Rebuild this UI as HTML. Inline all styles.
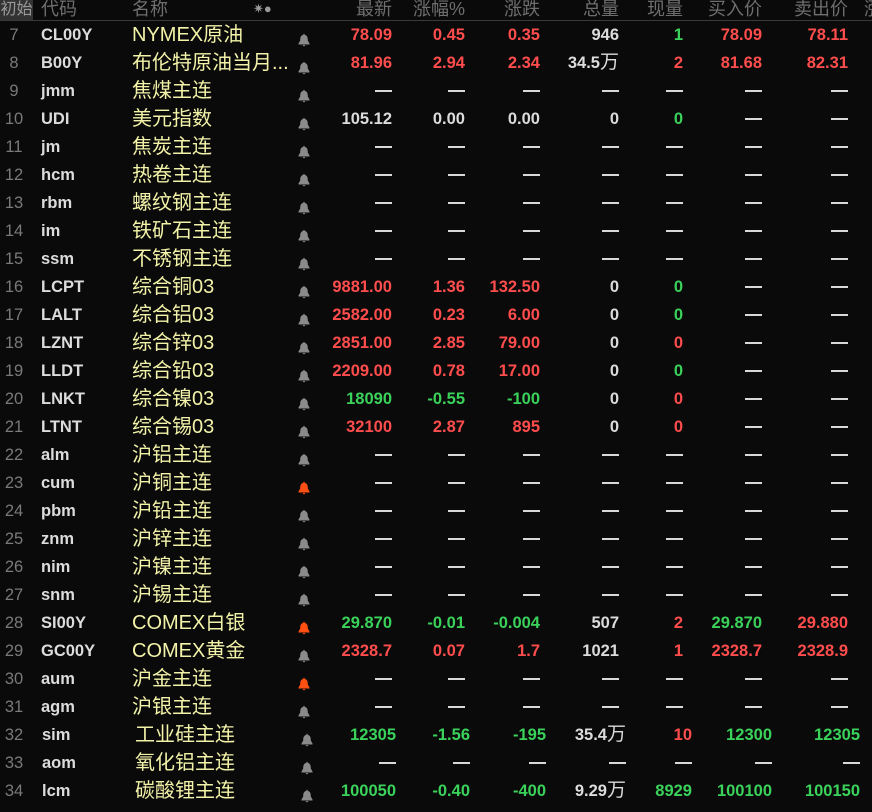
<!DOCTYPE html>
<html><head><meta charset="utf-8"><style>
body{margin:0;background:#0a0a0a;width:872px;height:802px;overflow:hidden;position:relative;font-family:"Liberation Sans","Noto Sans CJK SC",sans-serif}
.h{position:absolute;top:0;left:0;width:872px;height:20px;border-bottom:1px solid #3a3a3a;color:#6e6e6e;font-size:18px;line-height:20px}
.h span{position:absolute;top:-1px;white-space:nowrap}
.r{position:absolute;left:0;width:872px;height:28px;line-height:28px;font-size:16.5px;font-weight:bold;color:#dcdcdc;margin-top:1px}
.r span{position:absolute;top:0;white-space:nowrap}
.n{left:0;width:28px;text-align:center;color:#7a7a7a;font-weight:normal}
.k{left:41px}
.m{left:132px;font-size:20px;font-weight:normal;color:#f2f2a8}
.b{left:298px;top:7px!important}
.p1{right:480px}.p2{right:407px}.p3{right:332px}.p4{right:253px}.p5{right:189px}.p6{right:110px}.p7{right:24px}
.q .m{left:135px}.q .b{left:301px}.q .k{left:42px}
.q .p1{right:476px}.q .p2{right:402px}.q .p3{right:326px}.q .p4{right:246px}.q .p5{right:180px}.q .p6{right:100px}.q .p7{right:12px}
.R{color:#ff4d4d}.G{color:#3ad25a}
i.d{display:inline-block;width:17px;height:2px;background:#d8d8d8;vertical-align:middle;margin-top:-2px}
.w{font-weight:normal;font-size:19px}
</style></head><body>
<svg width="0" height="0" style="position:absolute"><defs><symbol id="bell" viewBox="0 0 12 14"><path d="M6 0.5 L7 2 C9.5 2.6 9.8 5 9.8 7.5 L11.5 10.5 L11.5 11.5 L0.5 11.5 L0.5 10.5 L2.2 7.5 C2.2 5 2.5 2.6 5 2 Z M4.5 12 L7.5 12 L6 13.5 Z"/></symbol></defs></svg>
<div class="h">
<span style="left:0;top:0;width:33px;height:20px;background:#333;color:#999;text-align:center;font-size:16px">初始</span>
<span style="left:41px">代码</span><span style="left:132px">名称</span>
<span style="left:253px;font-size:13px;color:#999">✷●</span>
<span style="right:480px">最新</span><span style="right:407px">涨幅%</span><span style="right:332px">涨跌</span><span style="right:253px">总量</span><span style="right:189px">现量</span><span style="right:110px">买入价</span><span style="right:24px">卖出价</span><span style="left:864px">涨</span>
</div>

<div class="r" style="top:20px"><span class="n">7</span><span class="k">CL00Y</span><span class="m">NYMEX原油</span><span class="b"><svg width="12" height="14" fill="#8a8a8a"><use href="#bell"/></svg></span><span class="p1 R">78.09</span><span class="p2 R">0.45</span><span class="p3 R">0.35</span><span class="p4">946</span><span class="p5 G">1</span><span class="p6 R">78.09</span><span class="p7 R">78.11</span></div>
<div class="r" style="top:48px"><span class="n">8</span><span class="k">B00Y</span><span class="m">布伦特原油当月...</span><span class="b"><svg width="12" height="14" fill="#8a8a8a"><use href="#bell"/></svg></span><span class="p1 R">81.96</span><span class="p2 R">2.94</span><span class="p3 R">2.34</span><span class="p4">34.5<span class="w" style="position:static">万</span></span><span class="p5 R">2</span><span class="p6 R">81.68</span><span class="p7 R">82.31</span></div>
<div class="r" style="top:76px"><span class="n">9</span><span class="k">jmm</span><span class="m">焦煤主连</span><span class="b"><svg width="12" height="14" fill="#8a8a8a"><use href="#bell"/></svg></span><span class="p1"><i class="d"></i></span><span class="p2"><i class="d"></i></span><span class="p3"><i class="d"></i></span><span class="p4"><i class="d"></i></span><span class="p5"><i class="d"></i></span><span class="p6"><i class="d"></i></span><span class="p7"><i class="d"></i></span></div>
<div class="r" style="top:104px"><span class="n">10</span><span class="k">UDI</span><span class="m">美元指数</span><span class="b"><svg width="12" height="14" fill="#8a8a8a"><use href="#bell"/></svg></span><span class="p1">105.12</span><span class="p2">0.00</span><span class="p3">0.00</span><span class="p4">0</span><span class="p5 G">0</span><span class="p6"><i class="d"></i></span><span class="p7"><i class="d"></i></span></div>
<div class="r" style="top:132px"><span class="n">11</span><span class="k">jm</span><span class="m">焦炭主连</span><span class="b"><svg width="12" height="14" fill="#8a8a8a"><use href="#bell"/></svg></span><span class="p1"><i class="d"></i></span><span class="p2"><i class="d"></i></span><span class="p3"><i class="d"></i></span><span class="p4"><i class="d"></i></span><span class="p5"><i class="d"></i></span><span class="p6"><i class="d"></i></span><span class="p7"><i class="d"></i></span></div>
<div class="r" style="top:160px"><span class="n">12</span><span class="k">hcm</span><span class="m">热卷主连</span><span class="b"><svg width="12" height="14" fill="#8a8a8a"><use href="#bell"/></svg></span><span class="p1"><i class="d"></i></span><span class="p2"><i class="d"></i></span><span class="p3"><i class="d"></i></span><span class="p4"><i class="d"></i></span><span class="p5"><i class="d"></i></span><span class="p6"><i class="d"></i></span><span class="p7"><i class="d"></i></span></div>
<div class="r" style="top:188px"><span class="n">13</span><span class="k">rbm</span><span class="m">螺纹钢主连</span><span class="b"><svg width="12" height="14" fill="#8a8a8a"><use href="#bell"/></svg></span><span class="p1"><i class="d"></i></span><span class="p2"><i class="d"></i></span><span class="p3"><i class="d"></i></span><span class="p4"><i class="d"></i></span><span class="p5"><i class="d"></i></span><span class="p6"><i class="d"></i></span><span class="p7"><i class="d"></i></span></div>
<div class="r" style="top:216px"><span class="n">14</span><span class="k">im</span><span class="m">铁矿石主连</span><span class="b"><svg width="12" height="14" fill="#8a8a8a"><use href="#bell"/></svg></span><span class="p1"><i class="d"></i></span><span class="p2"><i class="d"></i></span><span class="p3"><i class="d"></i></span><span class="p4"><i class="d"></i></span><span class="p5"><i class="d"></i></span><span class="p6"><i class="d"></i></span><span class="p7"><i class="d"></i></span></div>
<div class="r" style="top:244px"><span class="n">15</span><span class="k">ssm</span><span class="m">不锈钢主连</span><span class="b"><svg width="12" height="14" fill="#8a8a8a"><use href="#bell"/></svg></span><span class="p1"><i class="d"></i></span><span class="p2"><i class="d"></i></span><span class="p3"><i class="d"></i></span><span class="p4"><i class="d"></i></span><span class="p5"><i class="d"></i></span><span class="p6"><i class="d"></i></span><span class="p7"><i class="d"></i></span></div>
<div class="r" style="top:272px"><span class="n">16</span><span class="k">LCPT</span><span class="m">综合铜03</span><span class="b"><svg width="12" height="14" fill="#8a8a8a"><use href="#bell"/></svg></span><span class="p1 R">9881.00</span><span class="p2 R">1.36</span><span class="p3 R">132.50</span><span class="p4">0</span><span class="p5 G">0</span><span class="p6"><i class="d"></i></span><span class="p7"><i class="d"></i></span></div>
<div class="r" style="top:300px"><span class="n">17</span><span class="k">LALT</span><span class="m">综合铝03</span><span class="b"><svg width="12" height="14" fill="#8a8a8a"><use href="#bell"/></svg></span><span class="p1 R">2582.00</span><span class="p2 R">0.23</span><span class="p3 R">6.00</span><span class="p4">0</span><span class="p5 G">0</span><span class="p6"><i class="d"></i></span><span class="p7"><i class="d"></i></span></div>
<div class="r" style="top:328px"><span class="n">18</span><span class="k">LZNT</span><span class="m">综合锌03</span><span class="b"><svg width="12" height="14" fill="#8a8a8a"><use href="#bell"/></svg></span><span class="p1 R">2851.00</span><span class="p2 R">2.85</span><span class="p3 R">79.00</span><span class="p4">0</span><span class="p5 R">0</span><span class="p6"><i class="d"></i></span><span class="p7"><i class="d"></i></span></div>
<div class="r" style="top:356px"><span class="n">19</span><span class="k">LLDT</span><span class="m">综合铅03</span><span class="b"><svg width="12" height="14" fill="#8a8a8a"><use href="#bell"/></svg></span><span class="p1 R">2209.00</span><span class="p2 R">0.78</span><span class="p3 R">17.00</span><span class="p4">0</span><span class="p5 G">0</span><span class="p6"><i class="d"></i></span><span class="p7"><i class="d"></i></span></div>
<div class="r" style="top:384px"><span class="n">20</span><span class="k">LNKT</span><span class="m">综合镍03</span><span class="b"><svg width="12" height="14" fill="#8a8a8a"><use href="#bell"/></svg></span><span class="p1 G">18090</span><span class="p2 G">-0.55</span><span class="p3 G">-100</span><span class="p4">0</span><span class="p5 R">0</span><span class="p6"><i class="d"></i></span><span class="p7"><i class="d"></i></span></div>
<div class="r" style="top:412px"><span class="n">21</span><span class="k">LTNT</span><span class="m">综合锡03</span><span class="b"><svg width="12" height="14" fill="#8a8a8a"><use href="#bell"/></svg></span><span class="p1 R">32100</span><span class="p2 R">2.87</span><span class="p3 R">895</span><span class="p4">0</span><span class="p5 R">0</span><span class="p6"><i class="d"></i></span><span class="p7"><i class="d"></i></span></div>
<div class="r" style="top:440px"><span class="n">22</span><span class="k">alm</span><span class="m">沪铝主连</span><span class="b"><svg width="12" height="14" fill="#8a8a8a"><use href="#bell"/></svg></span><span class="p1"><i class="d"></i></span><span class="p2"><i class="d"></i></span><span class="p3"><i class="d"></i></span><span class="p4"><i class="d"></i></span><span class="p5"><i class="d"></i></span><span class="p6"><i class="d"></i></span><span class="p7"><i class="d"></i></span></div>
<div class="r" style="top:468px"><span class="n">23</span><span class="k">cum</span><span class="m">沪铜主连</span><span class="b"><svg width="12" height="14" fill="#ff4f12"><use href="#bell"/></svg></span><span class="p1"><i class="d"></i></span><span class="p2"><i class="d"></i></span><span class="p3"><i class="d"></i></span><span class="p4"><i class="d"></i></span><span class="p5"><i class="d"></i></span><span class="p6"><i class="d"></i></span><span class="p7"><i class="d"></i></span></div>
<div class="r" style="top:496px"><span class="n">24</span><span class="k">pbm</span><span class="m">沪铅主连</span><span class="b"><svg width="12" height="14" fill="#8a8a8a"><use href="#bell"/></svg></span><span class="p1"><i class="d"></i></span><span class="p2"><i class="d"></i></span><span class="p3"><i class="d"></i></span><span class="p4"><i class="d"></i></span><span class="p5"><i class="d"></i></span><span class="p6"><i class="d"></i></span><span class="p7"><i class="d"></i></span></div>
<div class="r" style="top:524px"><span class="n">25</span><span class="k">znm</span><span class="m">沪锌主连</span><span class="b"><svg width="12" height="14" fill="#8a8a8a"><use href="#bell"/></svg></span><span class="p1"><i class="d"></i></span><span class="p2"><i class="d"></i></span><span class="p3"><i class="d"></i></span><span class="p4"><i class="d"></i></span><span class="p5"><i class="d"></i></span><span class="p6"><i class="d"></i></span><span class="p7"><i class="d"></i></span></div>
<div class="r" style="top:552px"><span class="n">26</span><span class="k">nim</span><span class="m">沪镍主连</span><span class="b"><svg width="12" height="14" fill="#8a8a8a"><use href="#bell"/></svg></span><span class="p1"><i class="d"></i></span><span class="p2"><i class="d"></i></span><span class="p3"><i class="d"></i></span><span class="p4"><i class="d"></i></span><span class="p5"><i class="d"></i></span><span class="p6"><i class="d"></i></span><span class="p7"><i class="d"></i></span></div>
<div class="r" style="top:580px"><span class="n">27</span><span class="k">snm</span><span class="m">沪锡主连</span><span class="b"><svg width="12" height="14" fill="#8a8a8a"><use href="#bell"/></svg></span><span class="p1"><i class="d"></i></span><span class="p2"><i class="d"></i></span><span class="p3"><i class="d"></i></span><span class="p4"><i class="d"></i></span><span class="p5"><i class="d"></i></span><span class="p6"><i class="d"></i></span><span class="p7"><i class="d"></i></span></div>
<div class="r" style="top:608px"><span class="n">28</span><span class="k">SI00Y</span><span class="m">COMEX白银</span><span class="b"><svg width="12" height="14" fill="#ff4f12"><use href="#bell"/></svg></span><span class="p1 G">29.870</span><span class="p2 G">-0.01</span><span class="p3 G">-0.004</span><span class="p4">507</span><span class="p5 R">2</span><span class="p6 G">29.870</span><span class="p7 R">29.880</span></div>
<div class="r" style="top:636px"><span class="n">29</span><span class="k">GC00Y</span><span class="m">COMEX黄金</span><span class="b"><svg width="12" height="14" fill="#8a8a8a"><use href="#bell"/></svg></span><span class="p1 R">2328.7</span><span class="p2 R">0.07</span><span class="p3 R">1.7</span><span class="p4">1021</span><span class="p5 R">1</span><span class="p6 R">2328.7</span><span class="p7 R">2328.9</span></div>
<div class="r" style="top:664px"><span class="n">30</span><span class="k">aum</span><span class="m">沪金主连</span><span class="b"><svg width="12" height="14" fill="#ff4f12"><use href="#bell"/></svg></span><span class="p1"><i class="d"></i></span><span class="p2"><i class="d"></i></span><span class="p3"><i class="d"></i></span><span class="p4"><i class="d"></i></span><span class="p5"><i class="d"></i></span><span class="p6"><i class="d"></i></span><span class="p7"><i class="d"></i></span></div>
<div class="r" style="top:692px"><span class="n">31</span><span class="k">agm</span><span class="m">沪银主连</span><span class="b"><svg width="12" height="14" fill="#8a8a8a"><use href="#bell"/></svg></span><span class="p1"><i class="d"></i></span><span class="p2"><i class="d"></i></span><span class="p3"><i class="d"></i></span><span class="p4"><i class="d"></i></span><span class="p5"><i class="d"></i></span><span class="p6"><i class="d"></i></span><span class="p7"><i class="d"></i></span></div>
<div class="r q" style="top:720px"><span class="n">32</span><span class="k">sim</span><span class="m">工业硅主连</span><span class="b"><svg width="12" height="14" fill="#8a8a8a"><use href="#bell"/></svg></span><span class="p1 G">12305</span><span class="p2 G">-1.56</span><span class="p3 G">-195</span><span class="p4">35.4<span class="w" style="position:static">万</span></span><span class="p5 R">10</span><span class="p6 G">12300</span><span class="p7 G">12305</span></div>
<div class="r q" style="top:748px"><span class="n">33</span><span class="k">aom</span><span class="m">氧化铝主连</span><span class="b"><svg width="12" height="14" fill="#8a8a8a"><use href="#bell"/></svg></span><span class="p1"><i class="d"></i></span><span class="p2"><i class="d"></i></span><span class="p3"><i class="d"></i></span><span class="p4"><i class="d"></i></span><span class="p5"><i class="d"></i></span><span class="p6"><i class="d"></i></span><span class="p7"><i class="d"></i></span></div>
<div class="r q" style="top:776px"><span class="n">34</span><span class="k">lcm</span><span class="m">碳酸锂主连</span><span class="b"><svg width="12" height="14" fill="#8a8a8a"><use href="#bell"/></svg></span><span class="p1 G">100050</span><span class="p2 G">-0.40</span><span class="p3 G">-400</span><span class="p4">9.29<span class="w" style="position:static">万</span></span><span class="p5 G">8929</span><span class="p6 G">100100</span><span class="p7 G">100150</span></div>
</body></html>
